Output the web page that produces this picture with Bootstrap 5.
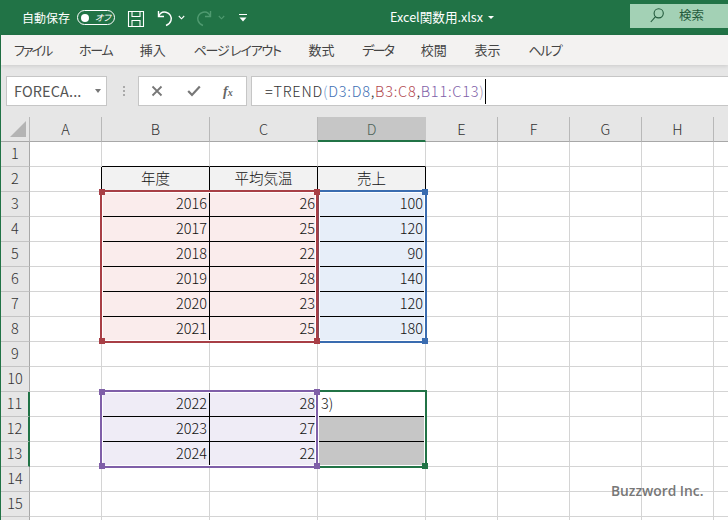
<!DOCTYPE html>
<html lang="ja">
<head>
<meta charset="utf-8">
<title>Excel関数用.xlsx</title>
<link href="https://cdn.jsdelivr.net/npm/bootstrap@5.3.0/dist/css/bootstrap.min.css" rel="stylesheet">
<style>
html,body{height:100%;}
body{margin:0;overflow:hidden;background:#217346;font-family:"Noto Sans CJK JP","Noto Sans",sans-serif;font-feature-settings:"palt";color:#333;}
.xl-app{width:728px;height:520px;padding-left:1px;overflow:hidden;}
.xl-title{height:35px;color:#fff;font-size:12px;margin-left:-1px;}
.xl-title>*{flex-shrink:0;}
.xl-auto{margin-left:22px;width:55px;}
.xl-toggle{width:38px;height:15px;border:1.3px solid #fff;border-radius:8px;gap:6px;padding-left:3px;font-size:9px;font-style:italic;line-height:1;}
.xl-knob{width:8px;height:8px;border-radius:50%;background:#fff;}
.xl-save{margin-left:12px;margin-top:2px;}
.xl-undo{margin-left:12px;}
.xl-ch1{margin-left:5px;}
.xl-redo{margin-left:11px;}
.xl-ch2{margin-left:6px;}
.xl-more{margin-left:14px;}
.xl-file{margin-left:143px;width:98px;font-size:12.6px;white-space:nowrap;}
.xl-filecaret{width:0;height:0;border:3px solid transparent;border-top:3px solid #fff;border-bottom:0;}
.xl-search{margin-left:136px;width:98px;height:24px;background:#a3d1b5;color:#235a3c;font-size:12.5px;margin-top:1px;margin-bottom:5px;padding-left:20px;gap:15px;}
.xl-tabs{height:30px;background:#f3f2f1;box-shadow:0 1px 4px rgba(0,0,0,.12);position:relative;font-size:13px;color:#444;padding-left:13px;gap:27.7px;white-space:nowrap;}
.xl-kana{letter-spacing:-1.4px;}
.xl-kana-a{letter-spacing:-1.9px;}
.xl-kana-b{letter-spacing:-1.2px;}
.xl-kana-c{letter-spacing:-1.8px;}
.xl-fbar{height:52px;background:#e6e6e6;padding:11px 0 0 5px;}
.xl-name{width:101px;height:30px;background:#fff;border:1px solid #c6c6c6;font-size:14.5px;color:#555;padding:0 5px 0 7px;letter-spacing:.1px;}
.xl-caret{width:0;height:0;border:3.5px solid transparent;border-top:4px solid #777;border-bottom:0;}
.xl-dots{width:31px;height:30px;gap:2px;padding-left:16px;}
.xl-dots i{display:block;width:2px;height:2px;background:#aaa;}
.xl-btns{width:109px;height:30px;background:#fff;border:1px solid #c6c6c6;padding-left:12px;}
.xl-btns>*{width:36px;flex-shrink:0;}
.xl-fx{font-family:"Liberation Serif",serif;font-style:italic;font-size:14px;color:#666;font-weight:700;}
.xl-fx small{font-size:10px;}
.xl-formula{margin-left:4px;flex:1;height:30px;background:#fff;border:1px solid #c6c6c6;border-right:0;padding-left:13px;font-size:14.5px;font-weight:300;color:#333;white-space:nowrap;letter-spacing:.76px;}
.f-blue{color:#3f70b5;}.f-red{color:#b2474e;}.f-pur{color:#8060a8;}.f-par1{color:#6f9bd0;}.f-par2{color:#9c8fb0;}
.xl-cursor{display:inline-block;width:1px;height:25px;background:#000;}
.xl-sheet{position:relative;height:403px;overflow:hidden;background:#fff;}
.xl-grid{table-layout:fixed;border-collapse:separate;border-spacing:0;width:799px;font-size:14.5px;color:#111;}
.xl-grid td,.xl-grid th{height:25px;padding:0;line-height:22px;vertical-align:top;border-right:1px solid #d4d4d4;border-bottom:1px solid #d4d4d4;font-weight:300;overflow:visible;white-space:nowrap;}
.xl-grid thead th{line-height:23px;background:#e6e6e6;border-right-color:#b8b8b8;border-bottom-color:#a8a8a8;text-align:center;color:#333;}
.xl-grid thead th.on{background:#c6c6c6;color:#4d6258;border-bottom:2px solid #217346;border-right-color:#c6c6c6;}
.xl-grid tbody th{background:#e6e6e6;border-right-color:#a8a8a8;border-bottom-color:#c4c4c4;text-align:center;color:#333;}
.xl-grid tbody th.on{border-right:2px solid #217346;}
.xl-grid td.num{text-align:right;padding-right:2px;}
.xl-grid td.bl{border-bottom-color:#000;}
.xl-grid td.br{border-right-color:#000;}
.xl-grid td.pend{padding-left:3px;}
.hd{background:#f2f2f2;text-align:center;}
.c-red{background:#faecec;}.c-blue{background:#e7eef9;}.c-pur{background:#efecf6;}.c-gray{background:#c6c6c6;}
.xl-corner{width:0;height:0;border-style:solid;border-width:0 0 16px 16px;border-color:transparent transparent #b4b4b4 transparent;margin:4px 0 0 9px;}
.rng{position:absolute;border:2px solid;box-shadow:inset 0 0 0 1px #fff;pointer-events:none;}
.r-red{left:99px;top:73px;width:218px;height:153px;border-color:#a83f46;}
.r-blue{left:316px;top:73px;width:110px;height:153px;border-color:#3a6cb0;border-left-color:#84485a;}
.r-pur{left:99px;top:273px;width:218px;height:78px;border-color:#7f5fa8;}
.r-grn{left:315px;top:273px;width:111px;height:78px;border-color:#217346;}
.hnd{position:absolute;width:6px;height:6px;z-index:3;}
.hnd-red{background:#a83f46;}.hnd-blue{background:#3a6cb0;}.hnd-pur{background:#7f5fa8;}.hnd-grn{background:#217346;}
.xl-mark{position:absolute;left:610px;top:364px;font-family:"Open Sans","Noto Sans",sans-serif;font-weight:600;font-size:13.8px;color:#777;line-height:20px;z-index:4;}
</style>
</head>
<body>
<div class="xl-app d-flex flex-column">
  <div class="xl-title d-flex align-items-center flex-shrink-0">
    <span class="xl-auto">自動保存</span>
    <span class="xl-toggle d-flex align-items-center"><span class="xl-knob"></span><span>オフ</span></span>
    <svg class="xl-save" width="18" height="18" viewBox="0 0 18 18" fill="none" stroke="#fff" stroke-width="1.1"><path d="M1.5 1.5H16.5V16.5H1.5Z"/><path d="M5 1.5V6.5H13V1.5"/><path d="M5 16.5V10.5H13V16.5"/></svg>
    <svg class="xl-undo" width="16" height="18" viewBox="0 0 16 18" fill="none" stroke="#fff" stroke-width="1.4"><path d="M1.5 2V7.5H7"/><path d="M1.8 7.2C3 4 6 2.5 9 3.2C13 4.2 15 8 14 11.5C13.4 13.5 11.5 15.5 9 16.5"/></svg>
    <svg class="xl-ch1" width="7" height="5" viewBox="0 0 7 5" fill="none" stroke="#fff" stroke-width="1.1"><path d="M.8 1L3.5 3.8L6.2 1"/></svg>
    <svg class="xl-redo" width="16" height="18" viewBox="0 0 16 18" fill="none" stroke="#4f9a70" stroke-width="1.4"><path d="M14.5 2V7.5H9"/><path d="M14.2 7.2C13 4 10 2.5 7 3.2C3 4.2 1 8 2 11.5C2.6 13.5 4.5 15.5 7 16.5"/></svg>
    <svg class="xl-ch2" width="7" height="5" viewBox="0 0 7 5" fill="none" stroke="#4f9a70" stroke-width="1.1"><path d="M.8 1L3.5 3.8L6.2 1"/></svg>
    <svg class="xl-more" width="8" height="8" viewBox="0 0 8 8" fill="#fff"><path d="M0 0H8V1H0Z"/><path d="M.5 3.5H7.5L4 7.5Z"/></svg>
    <span class="xl-file d-flex align-items-center">Excel関数用.xlsx</span>
    <span class="xl-filecaret"></span>
    <div class="xl-search d-flex align-items-center">
      <svg width="14" height="15" viewBox="0 0 14 15" fill="none" stroke="#235a3c" stroke-width="1.1"><circle cx="8.7" cy="5.3" r="4.6"/><path d="M5.5 8.7L.8 14"/></svg>
      <span>検索</span>
    </div>
  </div>
  <div class="xl-tabs d-flex align-items-center flex-shrink-0">
    <span class="xl-kana-a">ファイル</span><span class="xl-kana">ホーム</span><span>挿入</span><span class="xl-kana-b">ページ レイアウト</span><span>数式</span><span class="xl-kana-c">データ</span><span>校閲</span><span>表示</span><span class="xl-kana">ヘルプ</span>
  </div>
  <div class="xl-fbar d-flex flex-shrink-0">
    <div class="xl-name d-flex align-items-center justify-content-between"><span>FORECA...</span><span class="xl-caret"></span></div>
    <div class="xl-dots d-flex flex-column justify-content-center"><i></i><i></i><i></i></div>
    <div class="xl-btns d-flex align-items-center">
      <span class="d-flex"><svg width="12" height="12" viewBox="0 0 12 12" stroke="#777" stroke-width="1.8"><path d="M1.5 1.5L10.5 10.5M10.5 1.5L1.5 10.5"/></svg></span>
      <span class="d-flex"><svg width="14" height="12" viewBox="0 0 14 12" fill="none" stroke="#777" stroke-width="2.2"><path d="M1.2 6L5 10L12.8 1.5"/></svg></span>
      <span class="xl-fx">f<small>x</small></span>
    </div>
    <div class="xl-formula d-flex align-items-center"><span>=TREND</span><span class="f-par1">(</span><span class="f-blue">D3:D8</span><span>,</span><span class="f-red">B3:C8</span><span>,</span><span class="f-pur">B11:C13</span><span class="f-par2">)</span><span class="xl-cursor"></span></div>
  </div>
  <div class="xl-sheet">
    <table class="xl-grid">
      <colgroup><col style="width:29px"><col style="width:72px"><col style="width:108px"><col style="width:108px"><col style="width:108px"><col style="width:72px"><col style="width:72px"><col style="width:72px"><col style="width:72px"><col style="width:86px"></colgroup>
      <thead><tr><th class="align-top"><div class="xl-corner"></div></th><th>A</th><th>B</th><th>C</th><th class="on">D</th><th>E</th><th>F</th><th>G</th><th>H</th><th></th></tr></thead>
      <tbody>
        <tr><th>1</th><td></td><td class="bl"></td><td class="bl"></td><td class="bl"></td><td></td><td></td><td></td><td></td><td></td></tr>
        <tr><th>2</th><td class="br"></td><td class="hd br">年度</td><td class="hd br">平均気温</td><td class="hd br">売上</td><td></td><td></td><td></td><td></td><td></td></tr>
        <tr><th>3</th><td></td><td class="num c-red bl br">2016</td><td class="num c-red bl br">26</td><td class="num c-blue bl">100</td><td></td><td></td><td></td><td></td><td></td></tr>
        <tr><th>4</th><td></td><td class="num c-red bl br">2017</td><td class="num c-red bl br">25</td><td class="num c-blue bl">120</td><td></td><td></td><td></td><td></td><td></td></tr>
        <tr><th>5</th><td></td><td class="num c-red bl br">2018</td><td class="num c-red bl br">22</td><td class="num c-blue bl">90</td><td></td><td></td><td></td><td></td><td></td></tr>
        <tr><th>6</th><td></td><td class="num c-red bl br">2019</td><td class="num c-red bl br">28</td><td class="num c-blue bl">140</td><td></td><td></td><td></td><td></td><td></td></tr>
        <tr><th>7</th><td></td><td class="num c-red bl br">2020</td><td class="num c-red bl br">23</td><td class="num c-blue bl">120</td><td></td><td></td><td></td><td></td><td></td></tr>
        <tr><th>8</th><td></td><td class="num c-red bl br">2021</td><td class="num c-red bl br">25</td><td class="num c-blue bl">180</td><td></td><td></td><td></td><td></td><td></td></tr>
        <tr><th>9</th><td></td><td></td><td></td><td></td><td></td><td></td><td></td><td></td><td></td></tr>
        <tr><th>10</th><td></td><td></td><td></td><td></td><td></td><td></td><td></td><td></td><td></td></tr>
        <tr><th class="on">11</th><td></td><td class="num c-pur bl br">2022</td><td class="num c-pur bl br">28</td><td class="bl pend">3)</td><td></td><td></td><td></td><td></td><td></td></tr>
        <tr><th class="on">12</th><td></td><td class="num c-pur bl br">2023</td><td class="num c-pur bl br">27</td><td class="c-gray bl"></td><td></td><td></td><td></td><td></td><td></td></tr>
        <tr><th class="on">13</th><td></td><td class="num c-pur bl br">2024</td><td class="num c-pur bl br">22</td><td class="c-gray"></td><td></td><td></td><td></td><td></td><td></td></tr>
        <tr><th>14</th><td></td><td></td><td></td><td></td><td></td><td></td><td></td><td></td><td></td></tr>
        <tr><th>15</th><td></td><td></td><td></td><td></td><td></td><td></td><td></td><td></td><td></td></tr>
        <tr><th></th><td></td><td></td><td></td><td></td><td></td><td></td><td></td><td></td><td></td></tr>
      </tbody>
    </table>
    <div class="rng r-blue"><span class="hnd hnd-blue" style="right:-3px;top:-3px"></span><span class="hnd hnd-blue" style="right:-3px;bottom:-3px"></span></div>
    <div class="rng r-red"><span class="hnd hnd-red" style="left:-3px;top:-3px"></span><span class="hnd hnd-red" style="right:-4px;top:-3px"></span><span class="hnd hnd-red" style="left:-3px;bottom:-3px"></span><span class="hnd hnd-red" style="right:-4px;bottom:-3px"></span></div>
    <div class="rng r-grn"><span class="hnd hnd-grn" style="right:-3px;bottom:-3px"></span></div>
    <div class="rng r-pur"><span class="hnd hnd-pur" style="left:-3px;top:-3px"></span><span class="hnd hnd-pur" style="right:-4px;top:-3px"></span><span class="hnd hnd-pur" style="left:-3px;bottom:-3px"></span><span class="hnd hnd-pur" style="right:-4px;bottom:-3px"></span></div>
    <div class="xl-mark">Buzzword Inc.</div>
  </div>
</div>
<script src="https://cdn.jsdelivr.net/npm/bootstrap@5.3.0/dist/js/bootstrap.bundle.min.js"></script>
</body>
</html>
